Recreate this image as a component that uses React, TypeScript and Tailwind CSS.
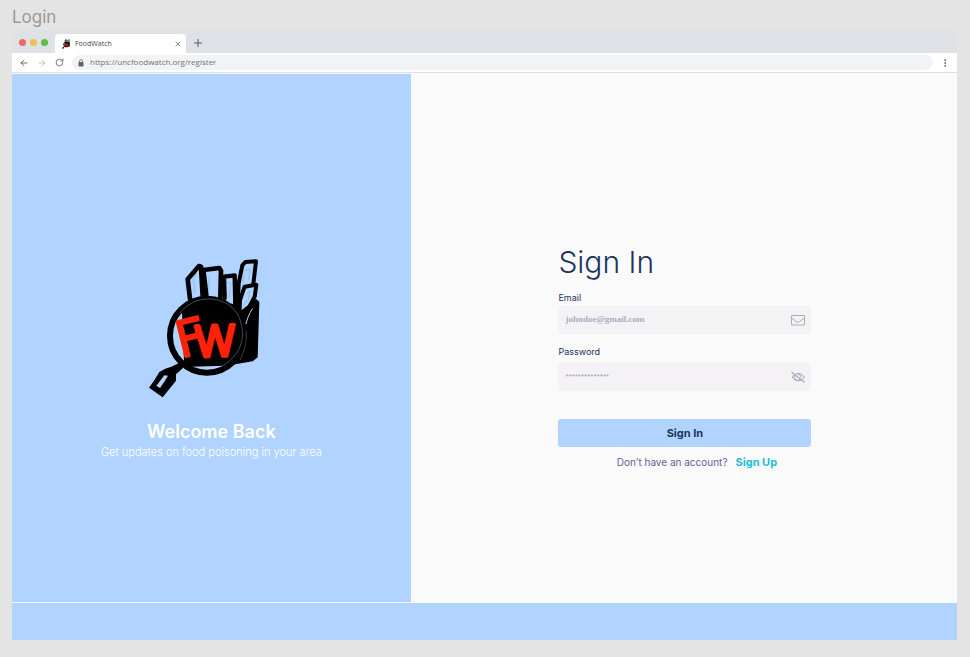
import { ArrowLeft, ArrowRight, EllipsisVertical, Plus, RotateCw, X } from "lucide-react";

function Logo({ className }: { className: string }) {
  return (
    <svg viewBox="27 24 336 420" className={className} aria-hidden="true" strokeLinecap="round" strokeLinejoin="round">
      {/* carton behind the lens */}
      <path d="M132 184 L350 148 L358 156 L353 322 L338 334 L290 342 L262 346 L132 348 Z" fill="#000" />
      {/* fries */}
      <g fill="#b0d4ff" stroke="#000">
        <path d="M150 146 L143 88 L177 48 L183 50 L188 138" strokeWidth="14" />
        <path d="M199 136 L190 60 L238 54 L243 62 L241 142" strokeWidth="14" />
        <path d="M254 144 L252 80 L284 76 L286 168" strokeWidth="13" />
        <path d="M296 100 L307 46 L316 36 L348 34 L340 102 L318 126 L302 178 L293 172 Z" strokeWidth="12" />
        <path d="M299 178 L300 150 L314 110 L349 104 L344 140 L328 170 L305 188" strokeWidth="12" />
        <path d="M188 68 L193 128" strokeWidth="17" fill="none" />
      </g>
      <g fill="none" stroke="#7fb4e6" strokeWidth="2">
        <path d="M158 92 L170 70 M162 92 L164 128 M207 80 L206 126 M263 96 L272 100 L267 142" />
        <path d="M314 62 L332 57 L326 88 M312 76 L308 106 M320 132 L330 122 L325 148 L310 166" />
      </g>
      {/* lens */}
      <circle cx="201" cy="257" r="108" fill="#000" />
      <path d="M126 186 C98 206 89 245 100 286 C108 314 119 326 132 334 Z" fill="#b0d4ff" />
      <path d="M151 350 L257 347 C228 367 183 369 151 350 Z" fill="#b0d4ff" />
      <ellipse cx="201" cy="257" rx="111" ry="111" fill="none" stroke="#000" strokeWidth="18" />
      <path d="M120 190 C151 142 229 132 273 170 C299 192 310 227 307 262 C303 302 276 333 246 348" fill="none" stroke="#8295a2" strokeWidth="1.5" />
      <path d="M337 176 C327 193 322 205 318 221" fill="none" stroke="#b0d4ff" strokeWidth="3" />
      <path d="M318 243 C322 276 313 302 301 329" fill="none" stroke="#8fb0d4" strokeWidth="1" />
      {/* handle */}
      <path d="M94 350 L119 338 L132 346 L126 357 L108 373 L108 392 L68 442 L27 413 L43 391 L58 366 L76 356 Z" fill="#000" />
      <path d="M49 407 L73 376 L84 377 L74 394 L60 414 Z" fill="#b0d4ff" />
      <g fill="#ff2209" stroke="#ff2209" fontFamily="Inter, sans-serif">
        <text x="124" y="323" fontSize="148" fontWeight="300" strokeWidth="9" transform="rotate(-14 124 323)">F</text>
        <text x="166" y="320" fontSize="126" fontWeight="300" strokeWidth="12" transform="rotate(-2 166 320)">W</text>
      </g>
    </svg>
  );
}

function MailIcon() {
  return (
    <svg viewBox="0 0 16 12" className="h-3 w-4" fill="none" stroke="#a9aebd" aria-hidden="true">
      <rect x="1.5" y="1.5" width="13" height="9.5" rx=".5" />
      <path d="M1.5 4 L6.5 7.7 Q8 8.7 9.5 7.7 L14.5 4" />
    </svg>
  );
}

function EyeOffIcon() {
  return (
    <svg viewBox="0 0 16 12" className="h-3 w-4" fill="none" stroke="#a0a6b7" aria-hidden="true">
      <path d="M2 6 Q8 -1.5 14.5 6 Q8 13.5 2 6 Z" />
      <path d="M5.2 4.2 A3.2 3.2 0 0 0 9.8 8.6 M7.8 3.2 A2.8 2.8 0 0 1 10.8 6.5" />
      <path d="M2.5 .5 L15 10.5" stroke="#f4f2f4" />
      <path d="M1.5 1 L14.5 11.2" strokeWidth="1.2" />
    </svg>
  );
}

function BrowserBar() {
  return (
    <header className="font-['Open_Sans',sans-serif]">
      <div className="flex h-[23px] items-end bg-[#dee1e6] pl-[7px]">
        <div className="flex h-[22px] items-center gap-1">
          <span className="size-[7px] rounded-full bg-[#ed695e]" />
          <span className="size-[7px] rounded-full bg-[#f5bd4f]" />
          <span className="size-[7px] rounded-full bg-[#58c043]" />
        </div>
        <div className="ml-[7px] flex h-[19px] w-[131px] items-center rounded-t bg-white pr-1 pl-1.5">
          <Logo className="h-2.5 w-2.5 shrink-0" />
          <span className="ml-1 flex-1 text-[7px] leading-3 text-[#45494d]">FoodWatch</span>
          <button type="button" aria-label="Close tab"><X className="size-2 text-[#45494d]" /></button>
        </div>
        <button type="button" aria-label="New tab" className="mb-1 ml-1.5"><Plus className="size-3 text-[#55595e]" /></button>
      </div>
      <div className="flex h-5 items-center border-b border-[#dedfe1] bg-white pr-[7px] pl-[7px]">
        <button type="button" aria-label="Back"><ArrowLeft className="size-2.5 text-[#505357]" /></button>
        <button type="button" aria-label="Forward" className="ml-2"><ArrowRight className="size-2.5 text-[#babcbe]" /></button>
        <button type="button" aria-label="Reload" className="ml-2"><RotateCw className="size-[9px] text-[#505357]" /></button>
        <div className="ml-2 flex h-[15px] flex-1 items-center rounded-full bg-[#f1f3f4] pl-1.5">
          <svg viewBox="0 0 6 8" className="h-2 w-1.5" aria-hidden="true">
            <rect x=".5" y="3" width="5" height="4.5" rx=".7" fill="#5f6368" />
            <path d="M1.5 3 V2.2 A1.5 1.5 0 0 1 4.5 2.2 V3" fill="none" stroke="#5f6368" strokeWidth=".8" />
          </svg>
          <input aria-label="Address" defaultValue="https://uncfoodwatch.org/register" className="mb-0.5 ml-1.5 h-3 flex-1 bg-transparent text-[8px] leading-3 text-[#6f7377] outline-none" />
        </div>
        <button type="button" aria-label="Menu" className="ml-[7px]"><EllipsisVertical className="size-2.5 text-[#505357]" /></button>
      </div>
    </header>
  );
}

export default function App() {
  return (
    <div className="min-h-screen bg-[#e4e4e4] pt-2 pr-[13px] pb-4 pl-3 font-['Inter',sans-serif]">
      <p className="h-[22px] text-[17px] leading-[18px] text-[#9a9a9a]">Login</p>
      <div className="overflow-hidden rounded-t bg-[#fafafa]">
        <BrowserBar />
        <main className="flex min-h-[530px]">
          <section className="flex w-[42.2%] flex-col items-center border-y border-[#eef6ff] bg-[#b0d4ff] pt-[184px] text-white">
            <div className="pr-3">
              <Logo className="h-[140px] w-[112px]" />
            </div>
            <h2 className="mt-[22px] text-[18px] leading-6 font-semibold">Welcome Back</h2>
            <p className="text-[11px] leading-4 font-light">Get updates on food poisoning in your area</p>
          </section>
          <section className="flex flex-1 flex-col items-center pt-[169px] pl-0.5 text-[#1c345f]">
            <form className="w-[253px]" onSubmit={(e) => e.preventDefault()}>
              <h1 className="text-[30px] leading-10 font-light">Sign In</h1>
              <label htmlFor="email" className="mt-2.5 block text-[9px] leading-3">Email</label>
              <div className="mt-0.5 flex h-7 items-center rounded-sm bg-[#f4f2f4] pr-[5px] pl-[7px]">
                <input id="email" type="email" placeholder="johndoe@gmail.com" className="min-w-0 flex-1 bg-transparent font-['Liberation_Serif',serif] text-[9px] font-bold outline-none placeholder:text-[#a9aebd]" />
                <MailIcon />
              </div>
              <label htmlFor="password" className="mt-3 block text-[9px] leading-3">Password</label>
              <div className="mt-[5px] flex h-7 items-center rounded-sm bg-[#f4f2f4] pr-[5px] pl-[7px]">
                <input id="password" type="password" placeholder="**************" className="min-w-0 flex-1 bg-transparent font-['Liberation_Sans',sans-serif] text-[8px] outline-none placeholder:text-[#a0a6b7]" />
                <button type="button" aria-label="Show password"><EyeOffIcon /></button>
              </div>
              <button type="submit" className="mt-7 h-7 w-full rounded-[3px] bg-[#b0d4ff] text-[11px] font-bold">Sign In</button>
              <p className="mt-[7px] flex items-baseline justify-center gap-2 pl-6 text-[10px] leading-4 text-[#6c5b98]">
                Don’t have an account?
                <a href="#signup" className="text-[11px] font-bold text-[#20bfd5]">Sign Up</a>
              </p>
            </form>
          </section>
        </main>
        <footer className="h-[37px] bg-[#b0d4ff]" />
      </div>
    </div>
  );
}
